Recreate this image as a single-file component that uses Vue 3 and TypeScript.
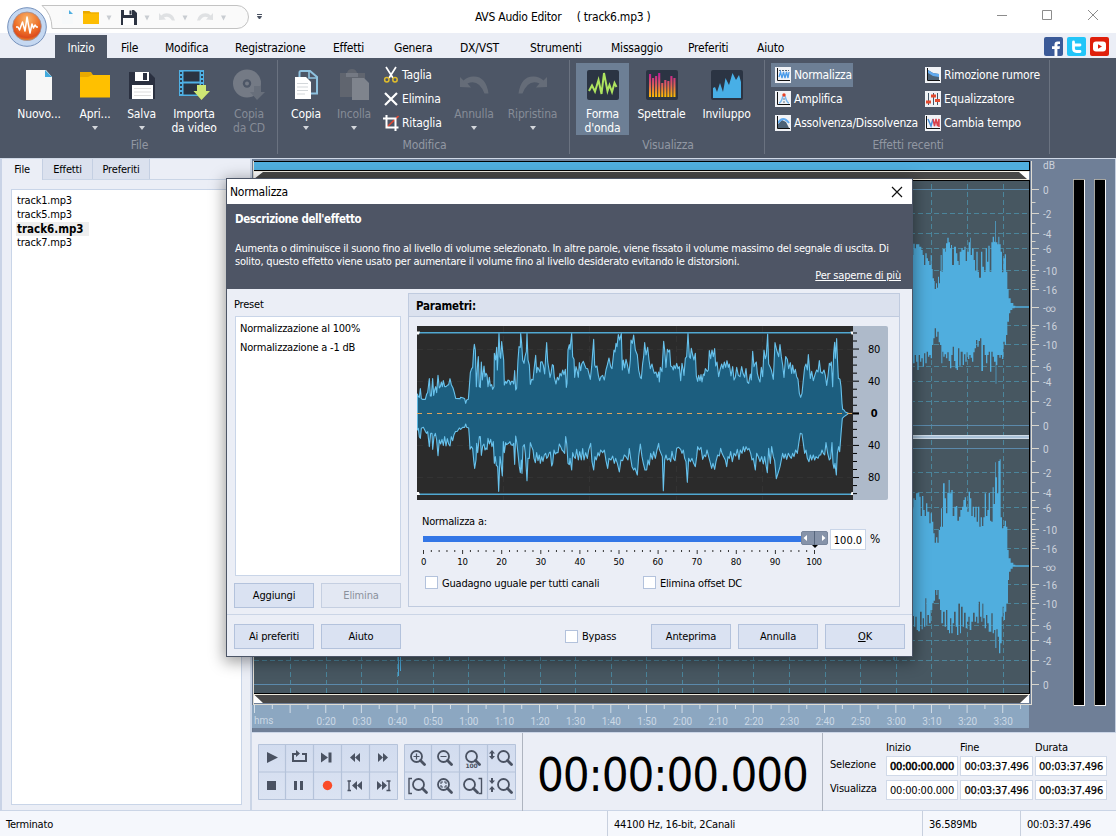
<script setup lang="ts">
type Pt = [number, number]

const parse = (s: string, dx = 0, dy = 0): Pt[] =>
  s.trim().split(/\s+/).map((p) => {
    const [x, y] = p.split(',').map(Number)
    return [x + dx, y + dy]
  })

/* envelope of the effect preview, in thirds of a pixel */
const previewTop: Pt[] = [
  ...parse('22,312 25,320 28,322 31,296 34,326 37,328 46,328 50,312 53,308 58,266 61,318 64,318 68,266 71,316 74,300 77,290 80,308 84,256 88,294 91,290 94,276 97,290 100,272 104,290 108,290 112,286 116,284 120,266 124,284 129,294 133,308 137,325 150,326 152,322 160,324 164,326 167,340 170,330 175,328 178,290 181,248 185,236 188,232 191,180 193,163 196,180 199,290 203,220 205,200 208,290 211,292 214,216 217,270 222,228 225,260 228,250 231,256 234,290 238,262 241,288 245,284 248,298 252,290 253,190 257,210 260,172 262,240 265,180 267,130 270,200 272,205 275,155 278,185 281,210 283,285 287,274 290,280 294,270 298,272 301,284 304,274 308,274 311,282 314,242 317,300 320,295 324,210 327,170 331,172 332,130 335,160 338,210 342,220 345,200 349,185 351,130 354,210 358,225 361,283 365,268 369,270 372,240 377,196 380,248 383,232 386,238 390,246 392,216 396,215 400,226 404,252 407,200 410,158 413,215 417,240 420,262 423,250 427,224 430,226 433,262 438,282 442,262 446,270 450,250 454,258 458,240 462,254 466,238 469,292 471,280 474,180 478,164 480,178 485,130 488,200 492,208 494,262 498,230 501,240 505,262 508,218 512,242 515,222 520,214 524,225 528,235 533,236 537,252 541,268 545,230 551,148 554,225 557,232 561,228 565,256 569,272 573,260 578,256 583,270 588,240 592,225 597,204 602,230 606,236 612,180 615,186 618,160 621,170 625,134 629,150 634,130 637,240 640,210 644,234 648,208 652,224 657,250 661,210 663,150 667,160 671,135 676,180 682,195 686,240 691,262 694,266 698,220 701,200 704,158 708,195 713,172 717,210 721,236 726,222 730,240 733,250 738,246 742,262 746,246'),
  ...parse('28,276 31,232 36,245 41,154 44,180 48,232 52,178 56,186 59,180 62,228 66,230 70,240 72,226 76,236 80,220 84,236 88,230 92,272 96,220 100,240 102,256 106,205 110,200 114,130 118,200 121,205 124,175 128,195 132,210 136,190 139,258 143,274 146,256 150,272 153,254 156,276 160,252 163,256 166,236 172,244 175,240 178,182 182,206 186,180 190,200 194,176 197,228 201,216 206,260 210,240 215,222 219,236 223,216 227,232 231,212 235,232 238,222 243,258 248,230 252,270 256,262 260,232 265,256 270,260 275,230 279,250 284,262 288,236 292,276 296,280 301,252 304,270 308,184 312,230 316,220 319,216 322,250 326,266 330,276 334,232 338,260 342,180 346,206 349,196 353,132 356,222 360,230 364,240 370,268 375,158 380,180 386,200 390,164 394,200 398,225 402,262 407,200 412,208 416,236 421,218 425,250 428,225 432,250 436,238 440,260 444,268 448,310 452,322 456,310 459,280 464,232 468,222 472,240 475,194 478,230 481,265 485,244 490,272 495,254 500,240 504,246 508,212 512,246 517,250 522,240 526,256 530,286 534,258 538,220 541,226 544,216 548,290 551,190 554,157 556,205 560,146 562,200 565,265 570,268 573,290 576,340 578,358 582,360 586,366 595,370', 720),
]
const previewBottom: Pt[] = [
  ...parse('22,420 25,415 28,440 31,445 34,415 40,412 46,424 50,430 53,425 58,470 62,430 66,430 68,478 72,440 76,430 80,450 84,497 88,450 92,462 96,448 100,466 104,440 108,468 112,446 116,462 120,468 124,440 128,452 132,434 136,425 142,424 148,414 152,418 158,412 164,412 167,402 170,412 176,414 178,440 180,478 184,470 188,476 191,510 194,535 198,510 200,460 203,488 208,440 211,440 214,496 218,468 222,462 225,480 228,474 231,478 234,445 238,462 242,448 246,470 250,455 253,520 256,500 259,526 263,530 266,604 270,500 272,512 277,558 280,455 283,488 287,458 290,464 296,460 300,455 303,464 308,466 311,460 314,523 317,438 320,455 324,490 328,530 331,548 334,510 336,550 339,470 343,464 346,490 351,572 354,505 358,505 361,458 365,470 369,480 372,505 376,518 380,488 384,512 388,495 391,520 395,500 399,514 403,495 407,490 410,505 414,500 418,488 421,486 425,528 428,520 432,480 436,492 440,488 444,488 448,462 452,470 456,480 460,484 464,490 467,440 470,460 474,520 478,524 480,505 485,540 488,488 492,500 496,505 500,478 505,510 509,485 514,510 518,476 522,510 527,488 532,505 536,480 542,460 546,515 551,540 555,500 559,510 564,488 568,498 572,480 578,488 583,480 588,512 593,535 597,505 603,510 608,498 613,520 617,505 622,520 628,546 633,510 638,512 643,495 648,500 654,510 658,476 662,505 666,530 671,540 675,534 682,555 686,500 691,462 696,500 700,520 705,540 710,540 714,510 718,525 722,490 727,508 731,485 736,505 741,480 746,460'),
  ...parse('28,478 33,490 37,500 40,602 44,510 48,495 52,510 58,505 62,515 66,484 70,505 75,512 80,475 86,472 92,478 96,490 100,480 104,505 108,515 112,577 116,505 121,515 126,505 131,520 136,530 140,500 143,470 148,480 153,472 158,508 163,495 167,500 171,480 176,500 180,515 185,535 189,520 194,538 198,515 203,495 208,498 212,475 216,490 221,500 226,510 230,530 234,500 238,505 242,485 247,515 252,490 257,498 262,478 267,508 271,480 276,490 280,470 284,485 288,470 293,480 297,475 302,490 306,510 310,505 316,540 320,490 325,500 330,515 335,500 340,522 344,500 348,525 352,548 356,475 361,520 365,470 370,500 374,512 379,566 384,550 390,530 394,510 398,490 402,505 406,492 410,508 415,490 420,500 424,505 428,490 432,500 437,480 442,490 447,455 451,430 456,432 460,460 464,490 468,480 472,505 477,515 481,495 485,510 490,495 494,510 498,500 504,505 508,495 512,495 516,480 520,490 524,495 528,458 533,490 538,510 542,505 546,458 549,520 552,535 555,520 559,555 562,490 566,470 569,485 574,420 577,385 582,380 588,376 595,371', 720),
]
const previewPath =
  'M' + previewTop.map((p) => p.join(' ')).join('L') + 'L' + [...previewBottom].reverse().map((p) => p.join(' ')).join('L') + 'Z'

/* stepped envelopes of both channels, in thirds of a pixel */
const stepPath = (top: Pt[], bottom: Pt[]): string => {
  const t = top.map((p, i) => (i ? `H${p[0] - 2}V${p[1]}` : `M${p[0]} ${p[1]}`)).join('')
  const rev = [...bottom].reverse()
  const b = rev.map((p, i) => (i ? `H${p[0] + 2}V${p[1]}` : `H${p[0]}V${p[1]}`)).join('')
  return t + b + 'H36Z'
}
const channel1 = stepPath(
  parse('36,300 42,266 46,280 50,268 60,275 66,285 70,300 74,330 78,295 82,310 86,318 90,330 94,300 97,342 100,370 104,378 106,402 110,385 113,398 116,365 119,385 122,348 124,300 127,350 130,282 138,290 140,265 144,248 148,262 152,280 155,270 158,330 164,275 170,295 174,318 178,330 181,290 186,280 190,285 195,275 199,318 203,290 208,262 212,248 214,300 218,280 223,315 227,348 231,290 235,350 239,368 245,290 249,335 254,350 259,280 263,320 267,272 271,350 276,262 280,245 284,260 287,198 289,262 294,268 297,245 300,268 304,290 308,352 312,310 316,298 320,350 324,402 328,430 334,444 342,452 348,454 388,454'),
  parse('36,610 42,625 46,600 50,620 54,645 58,600 62,620 66,610 70,635 74,595 78,625 82,590 86,605 90,600 94,610 98,570 102,550 106,520 110,545 114,530 118,562 122,570 125,625 128,590 132,605 136,598 140,610 144,592 148,618 152,640 156,600 160,575 164,618 168,640 172,645 176,580 180,632 186,590 190,630 194,598 198,620 202,592 206,612 210,600 214,608 218,620 222,592 226,580 230,555 234,575 238,558 242,550 247,648 252,570 256,600 260,625 264,600 268,590 272,650 276,590 280,605 285,620 287,686 290,630 296,600 300,608 304,600 308,612 312,560 316,570 320,540 325,500 329,475 335,465 342,460 348,458 388,458'),
)
const channel2 = stepPath(
  parse('36,235 42,205 46,210 50,190 54,188 60,200 64,258 68,198 72,240 76,258 80,220 84,245 90,280 94,250 98,275 102,310 106,338 110,322 114,338 118,300 122,290 125,235 128,290 131,160 136,205 140,250 144,188 148,150 151,190 156,180 160,258 165,230 170,228 174,272 179,260 183,240 188,230 192,210 196,202 200,230 204,245 208,185 212,205 216,258 220,230 224,262 228,230 232,275 236,230 240,290 244,262 248,288 252,262 256,190 260,258 264,240 268,188 272,272 276,275 280,172 283,222 287,97 289,142 293,190 297,93 301,88 304,262 308,295 312,288 316,272 320,290 324,360 328,385 334,398 342,404 348,406 388,406', 0, 825),
  parse('36,560 40,558 44,590 48,560 52,600 58,604 63,545 66,598 70,565 74,590 77,505 80,585 85,555 90,580 95,540 99,520 103,512 107,480 110,495 114,480 118,508 122,540 127,580 132,545 136,590 140,540 145,600 148,610 152,565 156,610 160,580 165,545 169,590 173,615 178,520 181,610 186,530 190,590 195,548 199,595 203,575 207,560 212,600 217,575 222,548 226,575 230,560 234,580 238,515 242,560 245,575 248,520 252,565 256,595 260,555 264,580 268,605 272,605 276,550 280,610 284,600 287,654 291,598 295,620 299,670 303,640 306,560 309,530 313,570 317,545 322,520 325,450 330,425 336,416 345,410 388,410', 0, 825),
)

const gridX = Array.from({ length: 21 }, (_, i) => 255 + (i + 1) * 35.63)
const dashY = [213.5, 233.5, 248.5, 270.5, 289.5, 325.5, 344.5, 366.5, 381.5, 401.5]
const db = [
  { y: 189.5, t: '0' }, { y: 213.5, t: '-2' }, { y: 233.5, t: '-4' }, { y: 248.5, t: '-6' },
  { y: 270.5, t: '-10' }, { y: 289.5, t: '-16' }, { y: 307.5, t: '-∞' }, { y: 325.5, t: '-16' },
  { y: 344.5, t: '-10' }, { y: 366.5, t: '-6' }, { y: 381.5, t: '-4' }, { y: 401.5, t: '-2' }, { y: 425.5, t: '0' },
]
const minorY = [202.5, 223.5, 241.5, 254.5, 260.5, 265.5, 274.5, 277.5, 280.5, 283.5, 286.5, 328.5, 331.5, 334.5, 337.5, 340.5, 349.5, 354.5, 360.5, 373.5, 391.5, 412.5]
const times = Array.from({ length: 20 }, (_, i) => {
  const s = (i + 2) * 10
  return { x: 255 + (i + 2) * 35.63, t: `${Math.floor(s / 60)}:${String(s % 60).padStart(2, '0')}` }
})
const timeTicks = Array.from({ length: 44 }, (_, i) => ({ x: 254.5 + i * 17.815, h: i % 2 ? 4 : 8 }))

const menu = ['File', 'Modifica', 'Registrazione', 'Effetti', 'Genera', 'DX/VST', 'Strumenti', 'Missaggio', 'Preferiti', 'Aiuto']
const tracks = ['track1.mp3', 'track5.mp3', 'track6.mp3', 'track7.mp3']
const sliderTicks = Array.from({ length: 51 }, (_, i) => ({ x: 6.5 + i * 7.82, h: i % 5 ? 2 : 4 }))
const sliderLabels = Array.from({ length: 11 }, (_, i) => ({ x: 6.5 + i * 39.05, t: String(i * 10) }))
const previewTicks = Array.from({ length: 21 }, (_, i) => ({ y: 7 + i * 8.03, big: i % 4 === 2 }))
const previewLabels = [{ y: 27, t: '80' }, { y: 59, t: '40' }, { y: 91.3, t: '0' }, { y: 123, t: '40' }, { y: 155, t: '80' }]
const spectrum = [23, 19, 21, 24, 14, 17, 16, 21, 19]
</script>

<template>
  <div class="app">
    <header class="titlebar">
      <svg class="quick" width="270" height="34" viewBox="0 0 270 34">
        <path d="M42 5.500H237a11.500 11.500 0 0 1 0 23H52Q52 14 42 5.500Z" fill="#fafafa" stroke="#c3c3c3" />
        <path d="M62 10h7l4 4v10H62Z" fill="#f7f9fa" /><path d="M69 10l4 4h-4Z" fill="#4eaee0" />
        <path d="M83 11h6l2 1.500h8V24H83Z" fill="#fdbd02" /><path d="M83 11h6l2 1.500h8v1H83Z" fill="#e9a900" />
        <path d="M106.500 15.500h5l-2.500 5ZM144.500 15.500h5l-2.500 5ZM182.500 15.500h5l-2.500 5ZM221 15.500h5l-2.500 5Z" fill="#c9cdd2" />
        <path d="M121 10h13l3 3v12H121Z" fill="#2d3442" /><path d="M124 10h8v5h-8Z" fill="#fff" /><path d="M129.500 10.500h2v4h-2Z" fill="#2d3442" /><path d="M123 18h11v7h-11Z" fill="#fff" />
        <path d="M159 13v7l7-.5-2.200-2q5-2.500 8.200 3h3q-1.500-7-8.500-7.200-3 0-5.300 2.200Z" fill="#dfe1e3" />
        <path d="M213 13v7l-7-.5 2.200-2q-5-2.500-8.200 3h-3q1.500-7 8.500-7.200 3 0 5.300 2.200Z" fill="#dfe1e3" />
        <path d="M257 14.500h5M257.500 16.500h4l-2 2.500Z" stroke="#4b5362" stroke-width="1" fill="#4b5362" />
      </svg>
      <span class="apptitle">AVS Audio Editor <i /> ( track6.mp3 )</span>
      <svg class="winbtns" width="116" height="34" viewBox="0 0 116 34" fill="none" stroke="#8c8c8c">
        <path d="M-3 15.500H7M42.500 10.500h9v9h-9ZM88 10l10 10M98 10L88 20" />
      </svg>
    </header>

    <svg class="logo" width="42" height="42" viewBox="0 0 42 42">
      <defs>
        <radialGradient id="ball" cx=".5" cy=".25" r=".8"><stop offset="0" stop-color="#f8b56c" /><stop offset=".55" stop-color="#ee7028" /><stop offset=".8" stop-color="#dd4d1d" /><stop offset="1" stop-color="#f3a12e" /></radialGradient>
      </defs>
      <circle cx="20" cy="20" r="19.300" fill="#c5d8f1" stroke="#7490bb" />
      <circle cx="20" cy="19.300" r="14.300" fill="url(#ball)" stroke="#9a8f98" stroke-width=".8" />
      <path d="M9 20h2l1.500 3 3-8 2.500 9 2-14 3 16 2-9 1.500 4 1.500-3 1.500 2h1.500" fill="none" stroke="#fff" stroke-width="1.500" stroke-linejoin="round" />
    </svg>

    <nav class="menu">
      <span class="on"><b>Inizio</b></span>
      <span v-for="m in menu" :key="m">{{ m }}</span>
      <svg class="social" width="66" height="19" viewBox="0 0 66 19">
        <rect width="19" height="19" rx="2" fill="#3b5a98" /><path d="M10.500 19v-7H8V9.300h2.500V7.500Q10.500 4.500 13.500 4.500H16V7h-1.600q-1 0-1 1v1.300H16l-.4 2.700h-2.200v7Z" fill="#fff" />
        <rect x="23" width="19" height="19" rx="2" fill="#22c5f8" /><path d="M29.500 5v6.500q0 3 3 3H36M29.500 8H36" fill="none" stroke="#fff" stroke-width="2.800" stroke-linecap="round" />
        <rect x="46" width="19" height="19" rx="2" fill="#df1f0b" /><rect x="49" y="4.500" width="13" height="10" rx="3" fill="#fff" /><path d="M54 7.200l4 2.300-4 2.300Z" fill="#df1f0b" />
      </svg>
    </nav>

    <section class="ribbon">
      <div class="group g-file">
        <div class="items">
          <div class="big w56"><svg width="32" height="34" viewBox="0 0 32 34"><path d="M3 2h20l6 7v23H3Z" fill="#f7f7f7" /><path d="M22 2l7 7h-7Z" fill="#42aadd" /></svg><p>Nuovo...</p></div>
          <div class="big w56"><svg width="32" height="34" viewBox="0 0 32 34"><path d="M1 4h11l2 3h17v6H1Z" fill="#e9a900" /><path d="M1 9h8l4-2h18v22.500H1Z" fill="#ffc000" /></svg><p>Apri...</p><em /></div>
          <div class="big w37"><svg width="32" height="34" viewBox="0 0 32 34"><path d="M3 4h20l6 6v21H3Z" fill="#2a3040" /><path d="M9 4h14v9H9Z" fill="#fff" /><path d="M17 5h4v7h-4Z" fill="#2a3040" /><path d="M6 17h21v14H6Z" fill="#fff" /><path d="M8 20.500h17M8 24h17M8 27.500h17" stroke="#ddd" /></svg><p>Salva</p><em /></div>
          <div class="big w68"><svg width="34" height="34" viewBox="0 0 34 34"><path d="M2 2h25v26H2Z" fill="#4fb0e4" /><path d="M6.500 3.500h16v10h-16ZM6.500 15.500h16v11h-16Z" fill="#2b3442" /><path d="M4 4v23M25 4v23" stroke="#2b3442" stroke-width="1.800" stroke-dasharray="2 2" /><path d="M20 17h9v6h4l-8.500 9-8-9H20Z" fill="#cfe774" /></svg><p>Importa<br />da video</p></div>
          <div class="big w42 off"><svg width="34" height="34" viewBox="0 0 34 34"><circle cx="15" cy="15.500" r="14" fill="#747a85" /><circle cx="15" cy="15.500" r="4.200" fill="#4d5666" /><circle cx="15" cy="15.500" r="2" fill="#747a85" /><path d="M22 18h7v6h4l-8 8-7-8h4Z" fill="#686f7b" /></svg><p>Copia<br />da CD</p></div>
        </div>
        <footer>File</footer>
      </div>

      <div class="group g-mod">
        <div class="items">
          <div class="big w56"><svg width="32" height="34" viewBox="0 0 32 34"><path d="M9.500 9V4.500q0-1.500 1.500-1.500h9l7 6v16.500h-6" fill="none" stroke="#8fc2df" stroke-width="2" /><path d="M19 3v7h8" fill="none" stroke="#8fc2df" stroke-width="1.600" /><path d="M5 9h11l5 5v17H5Z" fill="#fff" /><path d="M7 15.500h11M7 19h11M7 22.500h11M7 26h8" stroke="#d3d7da" /></svg><p>Copia</p><em /></div>
          <div class="big w40 off"><svg width="32" height="34" viewBox="0 0 32 34"><path d="M2 5h7q1-4 5-4t5 4h8v24H2Z" fill="#60656f" /><path d="M8 5h12v4H8Z" fill="#747983" /><path d="M14 10h12l5 5v17H14Z" fill="#7f848d" /></svg><p>Incolla</p><em /></div>
          <div class="small">
            <p><svg width="16" height="18" viewBox="0 0 16 18"><path d="M3 1l7 11M13 1L6 12" stroke="#fff" stroke-width="1.700" /><circle cx="3.800" cy="13.800" r="2.200" fill="none" stroke="#e0bd2c" stroke-width="1.500" /><circle cx="12" cy="13.800" r="2.200" fill="none" stroke="#e0bd2c" stroke-width="1.500" /></svg>Taglia</p>
            <p><svg width="16" height="18" viewBox="0 0 16 18"><path d="M2 3l12 12M14 3L2 15" stroke="#fff" stroke-width="2.200" /></svg>Elimina</p>
            <p><svg width="16" height="18" viewBox="0 0 16 18"><path d="M4 13L15.500 2" stroke="#e24733" stroke-width="1.600" /><path d="M0 4.500h12.500V17M3.500 1v12.500H15.500" stroke="#fff" stroke-width="2" fill="none" /></svg>Ritaglia</p>
          </div>
          <div class="big w52 off"><svg width="32" height="34" viewBox="0 0 32 34"><path d="M2 9v10l11 .5-3.500-4q11-5 17 10h4Q28 8.500 16 8.500q-6-.2-10.500 4Z" fill="#656c78" /></svg><p>Annulla</p><em /></div>
          <div class="big w65 off"><svg width="32" height="34" viewBox="0 0 32 34"><path d="M30 9v10l-11 .5 3.500-4q-11-5-17 10h-4Q4 8.500 16 8.500q6-.2 10.500 4Z" fill="#656c78" /></svg><p>Ripristina</p><em /></div>
        </div>
        <footer>Modifica</footer>
      </div>

      <div class="group g-vis">
        <div class="items">
          <div class="big w53 active"><svg width="32" height="34" viewBox="0 0 32 34"><rect y="2" width="32" height="30" rx="2" fill="#2b3443" /><path d="M2 23l3-5.500 3 6L11.500 12l3 14L17 5l3.500 18 2-6L25 24l2.500-9 2 4" fill="none" stroke="#aee45f" stroke-width="2" /></svg><p>Forma<br />d'onda</p></div>
          <div class="big w65"><svg width="32" height="34" viewBox="0 0 32 34"><defs><linearGradient id="heat" x1="0" y1="5" x2="0" y2="29" gradientUnits="userSpaceOnUse"><stop stop-color="#c0189a" /><stop offset=".5" stop-color="#e0605a" /><stop offset="1" stop-color="#ffbf00" /></linearGradient></defs><rect y="2" width="32" height="30" rx="2" fill="#2b3443" /><rect v-for="(h, i) in spectrum" :key="i" :x="3 + i * 3.05" :y="29 - h" width="2.100" :height="h" fill="url(#heat)" /></svg><p>Spettrale</p></div>
          <div class="big w65"><svg width="32" height="34" viewBox="0 0 32 34"><rect y="2" width="32" height="30" rx="2" fill="#2b3443" /><path d="M2 20l2-1 2 5 3-9 3 9L14.500 10l3.500 7L21.500 5 25 12l3-5 2 7v16H2Z" fill="#48afe6" /></svg><p>Inviluppo</p></div>
        </div>
        <footer>Visualizza</footer>
      </div>

      <div class="group g-fx">
        <div class="items fx">
          <p class="active"><svg width="16" height="16" viewBox="0 0 16 16"><rect width="16" height="16" fill="#f0f2f6" /><path d="M2.500 1v12.500H15" stroke="#111" fill="none" /><path d="M4 3.500h10" stroke="#567" stroke-dasharray="2 1" /><path d="M4 10l1.500-5L7 11l1.500-6 1.500 6 1.500-6L13 11l1-6" fill="none" stroke="#4a9bea" stroke-width="1.300" /></svg>Normalizza</p>
          <p class="c2"><svg width="16" height="16" viewBox="0 0 16 16"><rect width="16" height="16" fill="#f0f2f6" /><path d="M3 3l5 3 6 1v6H3Z" fill="#4d6276" /><path d="M3 3l5 3 6 1v3L8 9 3 6Z" fill="#60aaf0" /><path d="M2.500 1v12.500H15" stroke="#111" fill="none" /></svg>Rimozione rumore</p>
          <p><svg width="16" height="16" viewBox="0 0 16 16"><rect width="16" height="16" fill="#f0f2f6" /><path d="M4 12q2 0 4-7M10 5q2 7 4 7" fill="none" stroke="#77b8f0" stroke-width="1.500" /><path d="M9 7v6" stroke="#678" stroke-dasharray="2 1" /><circle cx="9" cy="4" r="1.700" fill="#e74024" /><path d="M2.500 1v12.500H15" stroke="#111" fill="none" /></svg>Amplifica</p>
          <p class="c2"><svg width="16" height="16" viewBox="0 0 16 16"><rect width="16" height="16" fill="#f0f2f6" /><path d="M3.500 2v12M8.500 2v12M12.500 2v12" stroke="#456" /><path d="M1 11h5M6 5h5M10 9.500h5" stroke="#e44a2e" stroke-width="3.200" /></svg>Equalizzatore</p>
          <p><svg width="16" height="16" viewBox="0 0 16 16"><rect width="16" height="16" fill="#f0f2f6" /><path d="M3 13V9l4-4 4 2 3 6Z" fill="#4d6276" /><path d="M3 8q5-8 11 0" fill="none" stroke="#60aaf0" stroke-width="2" /><path d="M2.500 1v12.500H15" stroke="#111" fill="none" /></svg>Assolvenza/Dissolvenza</p>
          <p class="c2"><svg width="16" height="16" viewBox="0 0 16 16"><rect width="16" height="16" fill="#f0f2f6" /><path d="M3 4l3 7 2-7" fill="none" stroke="#4a90da" stroke-width="1.500" /><path d="M8 4l1.500 7L11 4l1.500 7L14 4v8" fill="none" stroke="#d9434e" stroke-width="1.500" /><path d="M1.500 1v12.500H15" stroke="#111" fill="none" /></svg>Cambia tempo</p>
        </div>
        <footer>Effetti recenti</footer>
      </div>
    </section>

    <main class="main">
      <aside class="side">
        <div class="sidetabs"><span class="cur">File</span><span>Effetti</span><span>Preferiti</span></div>
        <ul class="tracks"><li v-for="t in tracks" :key="t" :class="{ sel: t === 'track6.mp3' }">{{ t }}</li></ul>
      </aside>

      <div class="work">
        <svg class="canvas" width="864" height="573" viewBox="252 159 864 573">
          <rect x="252" y="159" width="864" height="573" fill="#6f7f97" />
          <path d="M252.500 159V732" stroke="#69788f" />
          <path d="M1115.500 159V732" stroke="#c5cfe0" />
          <rect x="254" y="161" width="776" height="10" fill="#000" /><rect x="254" y="162" width="775" height="8" fill="#50aede" />
          <rect x="254" y="171" width="775" height="1" fill="#f4f1e8" /><rect x="254" y="172" width="775" height="7" fill="#484848" />
          <rect x="254" y="179" width="775" height="1" fill="#eee9dc" /><rect x="254" y="180" width="776" height="1" fill="#000" />
          <path d="M254 172h9l-9 7ZM1029 172h-10l8 7h2Z" fill="#fff" />
          <rect x="254" y="181" width="775" height="512" fill="#475761" />
          <g stroke="#4b859b" stroke-dasharray="5 3" shape-rendering="crispEdges">
            <line v-for="x in gridX" :key="x" :x1="x" :x2="x" y1="184" y2="693" />
            <template v-for="y in dashY" :key="y"><line x1="254" x2="1029" :y1="y" :y2="y" /><line x1="254" x2="1029" :y1="y + 259" :y2="y + 259" /></template>
          </g>
          <path d="M254 189.500H1029M254 425.500H1029M254 448.500H1029M254 684.500H1029" stroke="#5b89ab" />
          <rect x="254" y="435" width="776" height="4" fill="#a9c1d7" /><path d="M254 435.500h776M254 438.500h776" stroke="#dfe7ee" stroke-width=".7" />
          <g transform="translate(900 155) scale(.33333)" fill="#50aede"><path :d="channel1" /><path :d="channel2" /></g>
          <path d="M398.500 650V676M400.500 650V671M449.500 650v10M894 650v10" stroke="#4aa6d6" />
          <rect x="254" y="693" width="775" height="1" fill="#000" /><rect x="254" y="694" width="776" height="1" fill="#eee9dc" />
          <rect x="254" y="695" width="775" height="8" fill="#484848" /><path d="M254 694.500l9 8.500h-9ZM1029 694.500v8.500h-9Z" fill="#fff" />
          <rect x="1029" y="181" width="1" height="513" fill="#000" />
          <path d="M253.500 161V704M1031.500 161V704.500M253 704.500h779" stroke="#dfdcd3" fill="none" />
          <rect x="252" y="705" width="777" height="23" fill="#8ca7c1" />
          <g stroke="#d2dde7"><line v-for="t in timeTicks" :key="t.x" :x1="t.x" :x2="t.x" y1="705" :y2="705 + t.h" /></g>
          <g class="axis time"><text x="254" y="724">hms</text><text v-for="t in times" :key="t.t" :x="t.x" y="724.500">{{ t.t }}</text></g>
          <g stroke="#d6d4cd">
            <template v-for="(d, i) in db" :key="i"><line x1="1032" x2="1039" :y1="d.y" :y2="d.y" /><line x1="1032" x2="1039" :y1="d.y + 259" :y2="d.y + 259" /></template>
            <template v-for="y in minorY" :key="y"><line x1="1032" x2="1035.500" :y1="y" :y2="y" /><line x1="1032" x2="1035.500" :y1="y + 259" :y2="y + 259" /></template>
          </g>
          <g class="axis"><text x="1043" y="169">dB</text>
            <template v-for="(d, i) in db" :key="i"><text x="1043" :y="d.y + 4.500">{{ d.t }}</text><text x="1043" :y="d.y + 263.500">{{ d.t }}</text></template>
          </g>
          <g v-for="x in [1073, 1094]" :key="x"><rect :x="x" y="179" width="12" height="527" fill="#f4f4f4" /><path :d="`M${x + 0.5} 706V179.500h11.500`" fill="none" stroke="#a5a49e" /><rect :x="x + 1" y="180" width="10" height="525" fill="#000" /></g>
        </svg>

        <div class="transport">
          <svg class="pads" width="260" height="58" viewBox="257 743 260 58">
            <defs><linearGradient id="pad" x1="0" y1="0" x2="0" y2="1"><stop stop-color="#d2dcef" /><stop offset="1" stop-color="#dbe3f2" /></linearGradient></defs>
            <path d="M258.500 744.500h139v55h-139ZM404.500 744.500h111v55h-111Z" fill="url(#pad)" stroke="#b5c3da" />
            <path d="M258 772h140M404 772h112M285.500 744v56M313.500 744v56M341.500 744v56M369.500 744v56M431.500 744v56M459.500 744v56M487.500 744v56" stroke="#b5c3da" stroke-width="1.200" />
            <g fill="#4a5262">
              <path d="M267 752l11 5.500-11 5.500ZM321 752.500l7 5-7 5Z" /><path d="M328.500 752.500h3v10h-3Z" />
              <path d="M350 757.500l5-4.500v9ZM355 757.500l5-4.500v9ZM378 753l5 4.500-5 4.500ZM383 753l5 4.500-5 4.500Z" />
              <path d="M267 781h9v9h-9ZM294 781h3v9h-3ZM300 781h3v9h-3Z" />
              <path d="M352 785.500l5-4.500v9ZM357 785.500l5-4.500v9ZM377 781l5 4.500-5 4.500ZM382 781l5 4.500-5 4.500Z" />
              <path d="M296 750l4 3.500-4 3.500ZM489 753.500l3-3.500 3 3.500ZM489 756l3 3.500 3-3.500ZM489 780.500l3 3.500 3-3.500ZM489 789.500l3-3.500 3 3.500Z" />
            </g>
            <path d="M298 754h-5v7h13v-7h-4M492 753v4M492 778v3M492 789v3" fill="none" stroke="#4a5262" stroke-width="2" />
            <path d="M349 781v10M347.500 781h3.500M347.500 790.500h3.500M389 781v10M386.500 781h4M386.500 790.500h4M412 778.500h-3v15h3M478.500 778.500h3v15h-3" fill="none" stroke="#4a5262" stroke-width="1.400" />
            <circle cx="327.500" cy="785.500" r="4.700" fill="#fa4b28" />
            <g fill="none" stroke="#4a5262" stroke-width="1.800">
              <g v-for="c in [[416.5, 756.5], [443.5, 756.5], [471.5, 756.5], [503.5, 756.5], [418.5, 784.5], [443.5, 784.5], [469.5, 784.5], [503.5, 784.5]]" :key="c.join()">
                <circle :cx="c[0]" :cy="c[1]" r="5.500" /><path :d="`M${c[0] + 4} ${c[1] + 4}l4 4`" stroke-width="2.800" stroke-linecap="round" />
              </g>
              <path d="M413.500 756.500h6M416.500 753.500v6M440.500 756.500h6" stroke-width="1.200" />
              <path d="M441 784v-2h2M446 784v-2h-2M441 785v2h2M446 785v2h-2" stroke-width="1.100" />
            </g>
            <text class="tiny" x="465.500" y="768">100</text>
          </svg>
          <div class="clock">00:00:00.000</div>
          <div class="ranges">
            <span /><span>Inizio</span><span>Fine</span><span>Durata</span>
            <span>Selezione</span><b class="heavy">00:00:00.000</b><b>00:03:37.496</b><b>00:03:37.496</b>
            <span>Visualizza</span><i>00:00:00.000</i><b>00:03:37.496</b><b>00:03:37.496</b>
          </div>
        </div>
      </div>
    </main>

    <div class="status"><span>Terminato</span><span>44100 Hz, 16-bit, 2Canali</span><span>36.589Mb</span><span>00:03:37.496</span></div>

    <section class="dialog">
      <div class="dtitle">Normalizza<svg width="12" height="12" viewBox="0 0 12 12"><path d="M1 1l10 10M11 1L1 11" stroke="#111" stroke-width="1.200" /></svg></div>
      <div class="desc">
        <h3>Descrizione dell'effetto</h3>
        <p><span class="l1">Aumenta o diminuisce il suono fino al livello di volume selezionato. In altre parole, viene fissato il volume massimo del segnale di uscita. Di</span><br /><span class="l2">solito, questo effetto viene usato per aumentare il volume fino al livello desiderato evitando le distorsioni.</span></p>
        <u>Per saperne di più</u>
      </div>
      <div class="dbody">
        <div class="preset">
          <label>Preset</label>
          <div class="plist"><p>Normalizzazione al 100%</p><p>Normalizzazione a -1 dB</p></div>
          <div class="row"><button>Aggiungi</button><button class="dis">Elimina</button></div>
        </div>
        <div class="params">
          <h4>Parametri:</h4>
          <svg class="preview" width="471" height="174" viewBox="0 0 471 174">
            <rect x="400" width="71" height="174" rx="2" fill="#aebaca" /><rect width="436" height="174" fill="#2b2b2b" />
            <path d="M0 23.500h436M0 55.500h436M0 119.500h436M0 151.500h436M86.500 0v174M172.500 0v174M259.500 0v174M345.500 0v174" stroke="#363636" stroke-width=".8" stroke-dasharray="6 4" />
            <g transform="scale(.33333) translate(-21 -108)"><path :d="previewPath" fill="#1c5e7f" stroke="#68c2ec" stroke-width="3.300" stroke-linejoin="round" /></g>
            <path d="M0 87.500h436" stroke="#dca55c" stroke-dasharray="5 5" /><path d="M0 6.800h436M0 168.300h436" stroke="#50a8d2" stroke-width="1.400" />
            <path d="M0 5.500h3l-1 3H0ZM0 166h2l1 3H0ZM436 5.500h-2.500l1 3h1.500ZM436 166h-1.500l-1 3h2.500Z" fill="#fff" />
            <line v-for="t in previewTicks" :key="t.y" x1="436" :x2="t.big ? 442 : 440" :y1="t.y" :y2="t.y" stroke="#000" /><path d="M436 87.500h6" stroke="#000" stroke-width="2" />
            <text v-for="(l, i) in previewLabels" :key="i" :class="['pl', { zero: l.t === '0' }]" x="457" :y="l.y">{{ l.t }}</text>
          </svg>
          <label class="nlabel">Normalizza a:</label>
          <div class="sliderrow">
            <svg width="413" height="42" viewBox="0 0 413 42">
              <rect x="6" y="8" width="380" height="6" fill="#3376e6" />
              <rect x="384.500" y="3.500" width="26" height="13" rx="1.500" fill="#8693a9" stroke="#78859b" /><path d="M397.500 3v14" stroke="#56657c" /><path d="M390 7v6l-3.500-3ZM405 7v6l3.500-3Z" fill="#fff" /><path d="M395 17h6l-3 3Z" fill="#000" />
              <line v-for="t in sliderTicks" :key="t.x" :x1="t.x" :x2="t.x" y1="22" :y2="22 + t.h" stroke="#333" />
              <text v-for="l in sliderLabels" :key="l.t" class="sl" :x="l.x" y="36.800">{{ l.t }}</text>
            </svg>
            <span class="num">100.0</span><span class="pct">%</span>
          </div>
          <div class="checks"><label><i />Guadagno uguale per tutti canali</label><label><i />Elimina offset DC</label></div>
        </div>
      </div>
      <div class="dfoot">
        <button>Ai preferiti</button><button>Aiuto</button>
        <label><i />Bypass</label>
        <button>Anteprima</button><button>Annulla</button><button><u>O</u>K</button>
      </div>
    </section>
  </div>
</template>

<style>
body { margin: 0; overflow: hidden; }
</style>

<style scoped>
.app { position: relative; width: 1116px; height: 836px; display: flex; flex-direction: column; background: #ebeef6; color: #000; font: 11px/14px "DejaVu Sans Condensed", "DejaVu Sans", sans-serif; letter-spacing: -0.2px; overflow: hidden; }
.app * { box-sizing: border-box; }
p, h3, h4, ul { margin: 0; padding: 0; }
svg { display: block; flex: none; }
.titlebar { height: 33px; flex: none; display: flex; background: #fff; }
.apptitle { font-size: 12px; line-height: 34px; white-space: pre; width: 200px; letter-spacing: -0.25px; margin-left: 205px; }
.apptitle i { display: inline-block; width: 9px; }
.winbtns { margin-left: auto; overflow: visible; }
.logo { position: absolute; left: 7px; top: 7px; }
.menu { height: 25px; flex: none; display: grid; grid-template-columns: 66px 44px 70px 98px 61px 66px 70px 81px 77px 69px 60px; padding-left: 55px; font-size: 12px; line-height: 30px; position: relative; white-space: nowrap; }
.menu b { display: block; width: 52px; height: 23px; margin-top: 2px; line-height: 26px; background: #4d5666; color: #fff; text-align: center; font-weight: normal; }
.social { position: absolute; right: 6px; top: 4px; }
.ribbon { height: 100px; flex: none; background: #4d5666; display: flex; color: #fff; font-size: 12px; letter-spacing: -0.15px; white-space: nowrap; }
.group { display: flex; flex-direction: column; border-right: 1px solid #6a7280; margin: 2px 0 4px; }
.items { display: flex; height: 78px; padding-top: 3px; }
.group footer { color: #9298a3; text-align: center; line-height: 14px; padding-left: 2px; }
.g-file { width: 278px; } .g-file .items { padding-left: 11px; }
.g-mod { width: 292px; } .g-vis { width: 195px; } .g-vis .items { padding-left: 6px; } .g-fx { width: 285px; }
.big { display: flex; flex-direction: column; align-items: center; text-align: center; height: 72px; padding-top: 5px; }
.big p { margin-top: 5px; line-height: 14px; }
.big em { border: 3px solid transparent; border-top: 4px solid #d3d6db; border-bottom: 0; margin-top: 5px; }
.off p { color: #868c97; }
.active { background: #6d7f95; }
.w56 { width: 56px; } .w37 { width: 37px; } .w68 { width: 68px; } .w42 { width: 42px; } .w40 { width: 40px; } .w52 { width: 52px; } .w53 { width: 53px; } .w65 { width: 65px; }
.small { width: 74px; padding-left: 9px; }
.small p { display: flex; align-items: center; height: 24px; gap: 3px; line-height: 26px; }
.items.fx { display: grid; grid-template: repeat(3, 24px) / 150px 130px; padding-left: 6px; letter-spacing: -0.2px; }
.fx p { display: flex; align-items: center; gap: 3px; padding-left: 4px; line-height: 26px; height: 24px; }
.fx p.active { width: 82px; }
.main { height: 653px; flex: none; display: flex; border-top: 1px solid #cfd8e6; }
.side { width: 252px; border-left: 2px solid #c9d3e6; border-right: 2px solid #cbd5e6; border-bottom: 1px solid #cbd5e6; }
.sidetabs { display: flex; height: 21px; border-bottom: 1px solid #cad5e6; }
.sidetabs span { text-align: center; border-right: 1px solid #c4cfe2; background: #dbe1ee; width: 57px; line-height: 22px; }
.sidetabs .cur { width: 41px; background: #ebeef6; height: 21px; line-height: 21px; }
.sidetabs span:nth-child(2) { width: 50px; }
.tracks { margin: 9px 8px 0 9px; height: 616px; border: 1px solid #c9d5e8; background: #fff; list-style: none; padding: 4px; }
.tracks li { padding-left: 1px; line-height: 14px; height: 14px; }
.tracks .sel { font-weight: bold; background: #eee; width: 73px; white-space: nowrap; font-size: 11.5px; letter-spacing: 0; }
.work { flex: 1; }
.axis text { font: 10px Roboto, sans-serif; letter-spacing: 0; fill: #ccd2dc; }
.axis.time text { text-anchor: middle; fill: #cbd8e5; }
.axis.time text:first-child { text-anchor: start; }
.transport { height: 79px; display: flex; border-bottom: 1px solid #cbd5e6; border-top: 1px solid #cbd5e6; }
.pads { margin: 10px 0 0 5px; }
.tiny { font: bold 6px "DejaVu Sans", sans-serif; fill: #4a5262; }
.clock { border-left: 1px solid #aeb4bf; border-right: 1px solid #aeb4bf; width: 301px; margin-left: 5px; font-size: 47px; line-height: 83px; padding-left: 14px; letter-spacing: -1.1px; white-space: nowrap; overflow: hidden; height: 78px; }
.ranges { display: grid; grid-template-columns: 54px 72px 73px 72px; grid-template-rows: 15px 20px 20px; column-gap: 2px; row-gap: 4px; padding: 4px 0 0 7px; white-space: nowrap; }
.ranges span { line-height: 18px; }
.ranges span:nth-child(-n+4) { line-height: 22px; }
.ranges b, .ranges i { font-style: normal; font-weight: normal; border: 1px solid #d0d9e8; background: #fff; text-align: center; line-height: 19px; -webkit-text-stroke: 0.25px #000; }
.ranges i { -webkit-text-stroke: 0; }
.ranges .heavy { -webkit-text-stroke: 0.55px #000; }
.status { flex: 1; display: grid; grid-template-columns: 608px 315px 98px 95px; background: #f5f7fc; line-height: 28px; white-space: nowrap; }
.status span { padding-left: 6px; border-right: 1px solid #c8d0de; }
.status span:last-child { border: 0; }
.dialog { position: absolute; left: 226px; top: 178px; width: 687px; height: 479px; border: 1px solid #4c5566; background: #ebeef6; box-shadow: 0 3px 14px 2px rgba(0, 0, 0, .38); display: flex; flex-direction: column; }
.dtitle { height: 25px; background: #fff; display: flex; justify-content: space-between; align-items: center; padding: 0 9px 0 3px; font-size: 12px; }
.desc { height: 85px; background: #4e5565; color: #fff; padding: 8px 11px 0 8px; white-space: nowrap; text-align: right; }
.desc h3 { text-align: left; font-size: 11.5px; line-height: 14px; margin-bottom: 16px; letter-spacing: -0.4px; }
.desc p { text-align: left; line-height: 13px; margin-bottom: 1px; }
.l1 { letter-spacing: -0.265px; }
.desc u { line-height: 13px; }
.dbody { display: flex; height: 326px; border-bottom: 1px solid #cbd5e6; }
.preset { width: 181px; padding: 9px 0 0 7px; }
.preset > label { display: block; line-height: 14px; }
.plist { width: 166px; height: 260px; margin: 4px 0 7px 1px; border: 1px solid #c9d5e8; background: #fff; padding: 2px 4px; }
.plist p { line-height: 19px; white-space: nowrap; }
.row { display: flex; gap: 7px; }
button { width: 80px; height: 25px; padding: 1px 0 0; border: 1px solid #b3c2dc; background: #dae2f2; font: inherit; letter-spacing: -0.15px; color: #000; }
button.dis { background: #e3e8f3; border-color: #c5cfe1; color: #8b919c; }
.params { width: 492px; height: 314px; margin-top: 4px; border: 1px solid #c0cbdf; }
.params h4 { height: 23px; background: #dbe1ee; border-bottom: 1px solid #c0cbdf; line-height: 24px; padding-left: 7px; font-size: 11.5px; }
.preview { margin: 9px 0 0 8px; }
.pl { font: 11px "DejaVu Sans Condensed", sans-serif; text-anchor: middle; } .zero { font-weight: bold; }
.nlabel { display: block; margin: 15px 0 -1px 13px; }
.sliderrow { display: flex; margin-left: 8px; height: 42px; }
.sl { font: 9.5px "DejaVu Sans Condensed", sans-serif; text-anchor: middle; }
.num { width: 36px; height: 21px; background: #fff; border: 1px solid #c9d5e8; margin-top: 1px; line-height: 21px; text-align: center; letter-spacing: 0; }
.pct { margin: 4px 0 0 4px; font-size: 12px; }
.checks { display: flex; height: 14px; margin: 6px 0 0 16px; white-space: nowrap; }
.checks label { width: 218px; display: flex; gap: 4px; line-height: 15px; }
label i { width: 13px; height: 13px; border: 1px solid #b3c2dc; background: #fff; flex: none; }
.dfoot { display: flex; gap: 7px; padding: 9px 7px 0; }
.dfoot label { display: flex; gap: 4px; line-height: 26px; margin-left: 157px; width: 79px; }
.dfoot label i { margin-top: 6px; }
</style>
